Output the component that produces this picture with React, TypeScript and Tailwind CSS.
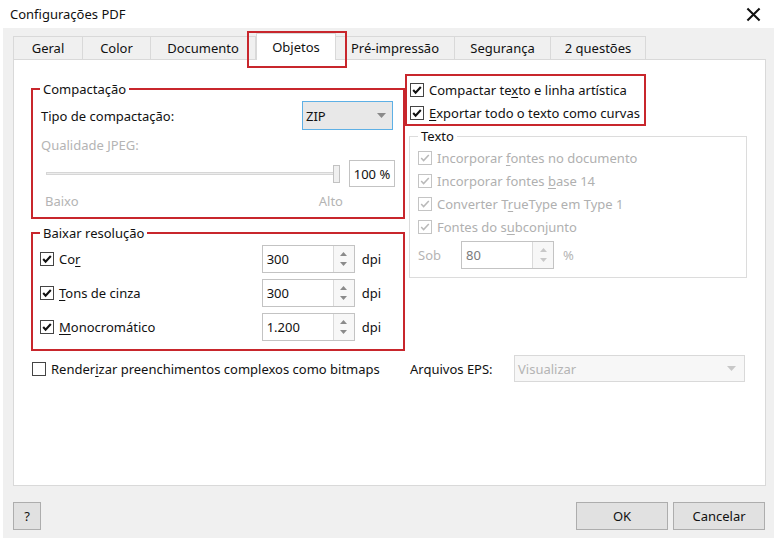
import type { ReactNode } from "react";

const RED = "border-[#c8262c]";

function Check({ checked, disabled }: { checked?: boolean; disabled?: boolean }) {
  return (
    <span
      className={`flex h-[14px] w-[14px] shrink-0 items-center justify-center border bg-white ${
        disabled ? "border-[#c4c4c4]" : "border-[#444444]"
      }`}
    >
      {checked && (
        <svg viewBox="0 0 12 12" className="h-[12px] w-[12px]">
          <path
            d="M2.2 6 L4.6 8.6 L9.8 3"
            fill="none"
            stroke={disabled ? "#b9b9b9" : "#111"}
            strokeWidth={disabled ? 1.5 : 2.1}
          />
        </svg>
      )}
    </span>
  );
}

function CheckRow({
  children,
  checked,
  disabled,
  className = "",
}: {
  children: ReactNode;
  checked?: boolean;
  disabled?: boolean;
  className?: string;
}) {
  return (
    <div className={`flex items-center gap-[5px] ${disabled ? "text-[#b0b0b0]" : ""} ${className}`}>
      <Check checked={checked} disabled={disabled} />
      <span className="whitespace-nowrap">{children}</span>
    </div>
  );
}

function Spin({ value, disabled }: { value: string; disabled?: boolean }) {
  const arrow = disabled ? "#c8c8c8" : "#8a8a8a";
  return (
    <div className="flex h-[28px] w-[93px] border border-[#c3c3c3] bg-white">
      <div className={`flex flex-1 items-center pl-[4px] ${disabled ? "text-[#7a7a7a]" : ""}`}>{value}</div>
      <div className="flex w-[21px] flex-col items-center justify-center gap-[6px] border-l border-[#dadada] bg-[#f7f7f7]">
        <svg viewBox="0 0 7 4" className="h-[4px] w-[7px]">
          <path d="M0 4 L3.5 0 L7 4 Z" fill={arrow} />
        </svg>
        <svg viewBox="0 0 7 4" className="h-[4px] w-[7px]">
          <path d="M0 0 L3.5 4 L7 0 Z" fill={arrow} />
        </svg>
      </div>
    </div>
  );
}

function Caret({ color }: { color: string }) {
  return (
    <svg viewBox="0 0 9 5" className="h-[5px] w-[9px]">
      <path d="M0 0 L4.5 5 L9 0 Z" fill={color} />
    </svg>
  );
}

const tabs = [
  { label: "Geral", w: "w-[70px]" },
  { label: "Color", w: "w-[69px]" },
  { label: "Documento", w: "w-[106px]" },
  { label: "Objetos", w: "w-[80px]", active: true },
  { label: "Pré-impressão", w: "w-[120px]" },
  { label: "Segurança", w: "w-[97px]" },
  { label: "2 questões", w: "w-[96px]" },
];

export default function App() {
  return (
    <div className="relative h-[542px] w-[777px] bg-white font-['Noto_Sans',sans-serif] text-[13px] leading-[16px] text-[#111]">
      {/* title bar */}
      <div className="flex h-[28px] items-center justify-between pl-[10px] pr-[16px]">
        <span className="text-[13px]">Configurações PDF</span>
        <svg viewBox="0 0 16 16" className="h-[15px] w-[15px]">
          <path d="M1.5 1.5 L14.5 14.5 M14.5 1.5 L1.5 14.5" stroke="#111" strokeWidth="2.2" />
        </svg>
      </div>

      <div className="mx-[3px] h-[510px] bg-[#f0f0f0] pl-[10px] pr-[8px] pt-[5px]">
        {/* tabs */}
        <div className="flex h-[26px] items-end">
          {tabs.map((t) =>
            t.active ? (
              <div
                key={t.label}
                className={`${t.w} relative z-10 -mb-px flex h-[27px] items-center justify-center border border-b-0 border-[#d9d9d9] bg-white`}
              >
                {t.label}
              </div>
            ) : (
              <div
                key={t.label}
                className={`${t.w} -ml-px flex h-[23px] items-center justify-center border border-b-0 border-[#d9d9d9] bg-[#f0f0f0] first:ml-0`}
              >
                {t.label}
              </div>
            )
          )}
        </div>

        {/* panel */}
        <div className="h-[427px] border border-[#d9d9d9] bg-white pl-[17px] pt-[14px]">
          <div className="flex items-start">
            {/* left column */}
            <div className="w-[374px] pt-[7px]">
              <fieldset className={`border-2 ${RED} pb-[7px]`}>
                <legend className="ml-[7px] px-[3px]">Compactação</legend>
                <div className="mt-[4px] flex h-[29px] items-center justify-between pl-[8px] pr-[10px]">
                  <span>Tipo de compactação:</span>
                  <div className="flex h-[29px] w-[91px] items-center justify-between border border-[#5eb0e5] bg-[#e8e8e8] pl-[3px] pr-[6px]">
                    <span>ZIP</span>
                    <Caret color="#8a8a8a" />
                  </div>
                </div>
                <div className="mt-[6px] pl-[8px] leading-[18px] text-[#b4b4b4]">Qualidade JPEG:</div>
                <div className="mt-[6px] flex h-[27px] items-center pl-[13px] pr-[8px]">
                  <div className="relative flex h-[18px] w-[294px] items-center">
                    <div className="h-[3px] w-[290px] border border-[#d6d6d6] bg-[#ececec]" />
                    <div className="absolute right-0 top-0 h-[18px] w-[7px] border border-[#c2c2c2] bg-[#f0f0f0]" />
                  </div>
                  <div className="ml-auto flex h-[27px] w-[46px] items-center justify-center border border-[#c3c3c3] bg-white">
                    100 %
                  </div>
                </div>
                <div className="mt-[5px] flex w-[310px] justify-between pl-[12px] leading-[18px] text-[#b4b4b4]">
                  <span>Baixo</span>
                  <span>Alto</span>
                </div>
              </fieldset>

              <fieldset className={`mt-[6px] border-2 ${RED} pb-[8px]`}>
                <legend className="ml-[7px] px-[3px]">Baixar resolução</legend>
                <div className="mt-[4px] flex flex-col gap-[6px]">
                  {[
                    { pre: "Co", u: "r", post: "", v: "300" },
                    { pre: "", u: "T", post: "ons de cinza", v: "300" },
                    { pre: "", u: "M", post: "onocromático", v: "1.200" },
                  ].map((r) => (
                    <div key={r.v + r.post} className="flex h-[28px] items-center pl-[7px] pr-[22px]">
                      <CheckRow checked className="flex-1">
                        {r.pre}
                        <u className="underline-offset-2">{r.u}</u>
                        {r.post}
                      </CheckRow>
                      <Spin value={r.v} />
                      <span className="ml-[7px]">dpi</span>
                    </div>
                  ))}
                </div>
              </fieldset>
            </div>

            {/* right column */}
            <div className="w-[342px]">
              <div className={`w-[241px] border-2 ${RED} pl-[3px] pt-[2px]`}>
                <CheckRow checked className="h-[23px]">
                  Compactar te<u className="underline-offset-2">x</u>to e linha artística
                </CheckRow>
                <CheckRow checked className="h-[23px]">
                  <u className="underline-offset-2">E</u>xportar todo o texto como curvas
                </CheckRow>
              </div>

              <fieldset className="ml-[4px] mt-[2px] w-[338px] border border-[#dcdcdc] pb-[8px]">
                <legend className="ml-[8px] px-[3px]">Texto</legend>
                <div className="pl-[8px] pt-[2px]">
                  <CheckRow checked disabled className="h-[23px]">
                    Incorporar <u className="underline-offset-2">f</u>ontes no documento
                  </CheckRow>
                  <CheckRow checked disabled className="h-[23px]">
                    Incorporar fontes <u className="underline-offset-2">b</u>ase 14
                  </CheckRow>
                  <CheckRow checked disabled className="h-[23px]">
                    Converter T<u className="underline-offset-2">r</u>ueType em Type 1
                  </CheckRow>
                  <CheckRow checked disabled className="h-[23px]">
                    Fontes do s<u className="underline-offset-2">u</u>bconjunto
                  </CheckRow>
                  <div className="mt-[3px] flex h-[28px] items-center text-[#b4b4b4]">
                    <span className="w-[43px]">Sob</span>
                    <Spin value="80" disabled />
                    <span className="ml-[9px]">%</span>
                  </div>
                </div>
              </fieldset>
            </div>
          </div>

          {/* bottom row */}
          <div className="mt-[4px] flex h-[27px] items-center">
            <div className="w-[379px] pl-[1px]">
              <CheckRow>
                Render<u className="underline-offset-2">i</u>zar preenchimentos complexos como bitmaps
              </CheckRow>
            </div>
            <span className="w-[104px]">Arquivos EPS:</span>
            <div className="flex h-[27px] w-[231px] items-center justify-between border border-[#d9d9d9] bg-[#f7f7f7] pl-[3px] pr-[8px] text-[#b4b4b4]">
              <span>Visualizar</span>
              <Caret color="#c8c8c8" />
            </div>
          </div>
        </div>

        {/* buttons */}
        <div className="mt-[16px] flex items-center">
          <button className="flex h-[28px] w-[28px] items-center justify-center border border-[#adadad] bg-[#e1e1e1]">
            ?
          </button>
          <div className="ml-auto flex gap-[5px] pr-[1px]">
            <button className="h-[28px] w-[92px] border border-[#adadad] bg-[#e1e1e1]">OK</button>
            <button className="h-[28px] w-[92px] border border-[#adadad] bg-[#e1e1e1]">Cancelar</button>
          </div>
        </div>
      </div>

      {/* annotation box around the active tab */}
      <div className={`pointer-events-none absolute left-[247px] top-[31px] h-[37px] w-[100px] border-2 ${RED}`} />
    </div>
  );
}
